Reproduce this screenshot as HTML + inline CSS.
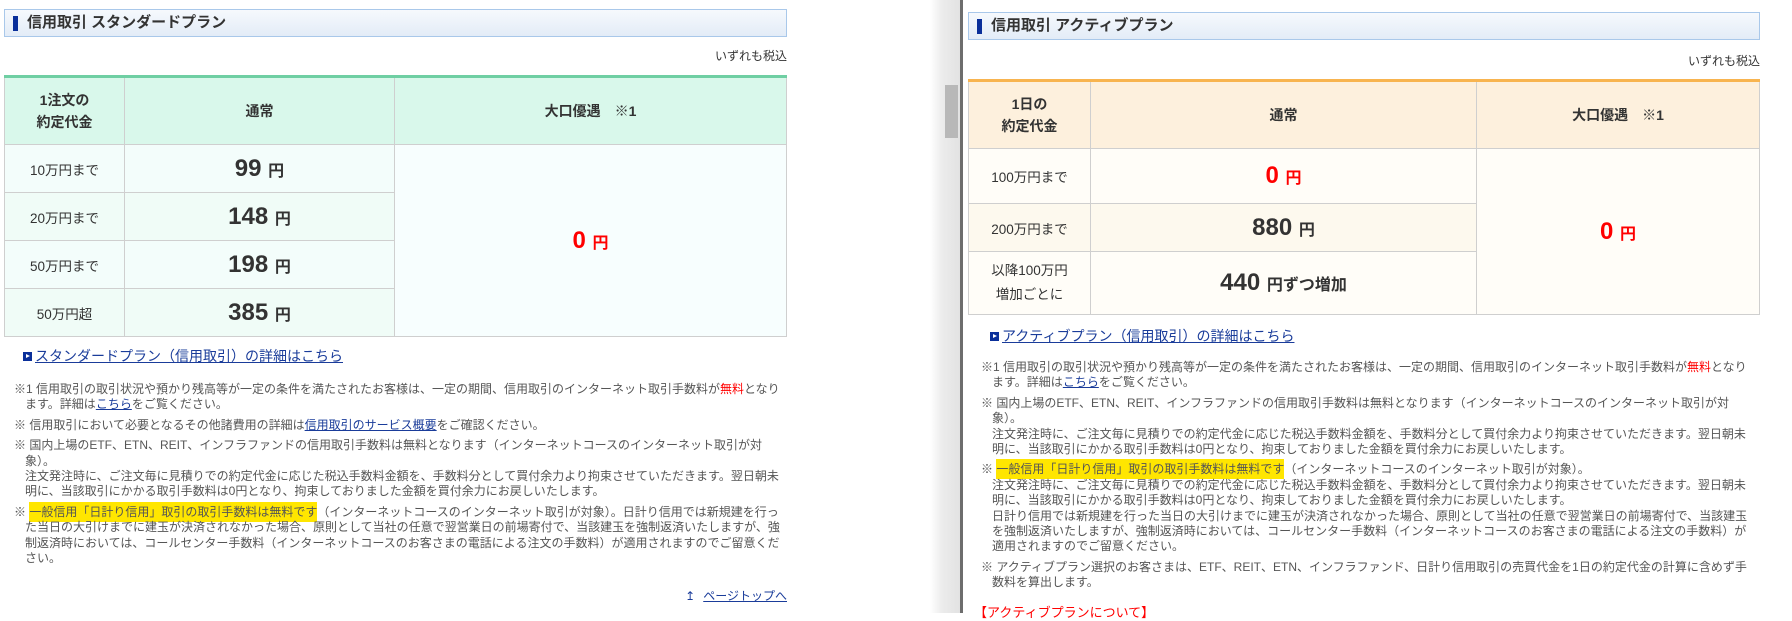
<!DOCTYPE html>
<html><head><meta charset="utf-8"><style>
*{margin:0;padding:0;box-sizing:border-box}
body{width:1792px;height:613px;overflow:hidden;background:#fff;font-family:"Liberation Sans","Noto Sans CJK JP",sans-serif;color:#333;position:relative}
.hd{position:absolute;height:28px;border:1px solid #a9c8ea;background:linear-gradient(#f6f9fd,#e3ecf7);font-size:15px;font-weight:bold;color:#333;line-height:26px;padding-left:22px}
.hd:before{content:"";position:absolute;left:8px;top:6px;width:5px;height:15px;background:#0a2f9a}
.tax{position:absolute;font-size:12px;color:#333;text-align:right}
table{position:absolute;border-collapse:collapse;table-layout:fixed}
td{border:1px solid #cfcfcf;text-align:center;font-size:13.5px;color:#333}
.h td{font-weight:bold;font-size:14px;line-height:22px}
.num{font-size:24px;font-weight:bold;color:#333}
.num small{font-size:16px}
.red{color:#f00}
.lk{position:absolute;font-size:14px;color:#1a3c9a;text-decoration:underline}
.lk i{display:inline-block;width:9px;height:9px;background:#0a2f9a;margin-right:3px;position:relative;top:0px}
.lk i:after{content:"";position:absolute;left:3px;top:2px;border-left:4px solid #fff;border-top:2.5px solid transparent;border-bottom:2.5px solid transparent}
.notes{position:absolute;font-size:12px;color:#555;line-height:15.4px}
.notes p{padding-left:11px;text-indent:-11px;margin-bottom:5px}
.notes a{color:#1a3c9a;text-decoration:underline}
.hl{background:#ffe600;padding:3px 0}
</style></head><body>

<div class="hd" style="left:4px;top:9px;width:783px">信用取引 スタンダードプラン</div>
<div class="tax" style="left:500px;top:47px;width:287px">いずれも税込</div>
<table style="left:4px;top:75px;width:783px;border-top:3px solid #6fcfa3">
<colgroup><col style="width:120px"><col style="width:270px"><col></colgroup>
<tr class="h" style="height:68px;background:#d9f8eb"><td>1注文の<br>約定代金</td><td>通常</td><td>大口優遇　※1</td></tr>
<tr style="height:48px;background:#f3fdfb"><td>10万円まで</td><td><span class="num">99 <small>円</small></span></td><td rowspan="4" style="background:#f7fefe"><span class="num red">0 <small>円</small></span></td></tr>
<tr style="height:48px;background:#f0fcf7"><td>20万円まで</td><td><span class="num">148 <small>円</small></span></td></tr>
<tr style="height:48px;background:#f3fdfb"><td>50万円まで</td><td><span class="num">198 <small>円</small></span></td></tr>
<tr style="height:48px;background:#f0fcf7"><td>50万円超</td><td><span class="num">385 <small>円</small></span></td></tr>
</table>
<div class="lk" style="left:23px;top:346px"><i></i>スタンダードプラン（信用取引）の詳細はこちら</div>
<div class="notes" style="left:14px;top:382px;width:776px">
<p>※1 信用取引の取引状況や預かり残高等が一定の条件を満たされたお客様は、一定の期間、信用取引のインターネット取引手数料が<span class="red">無料</span>となります。詳細は<a>こちら</a>をご覧ください。</p>
<p>※ 信用取引において必要となるその他諸費用の詳細は<a>信用取引のサービス概要</a>をご確認ください。</p>
<p>※ 国内上場のETF、ETN、REIT、インフラファンドの信用取引手数料は無料となります（インターネットコースのインターネット取引が対象）。<br>注文発注時に、ご注文毎に見積りでの約定代金に応じた税込手数料金額を、手数料分として買付余力より拘束させていただきます。翌日朝未明に、当該取引にかかる取引手数料は0円となり、拘束しておりました金額を買付余力にお戻しいたします。</p>
<p>※ <span class="hl">一般信用「日計り信用」取引の取引手数料は無料です</span>（インターネットコースのインターネット取引が対象）。日計り信用では新規建を行った当日の大引けまでに建玉が決済されなかった場合、原則として当社の任意で翌営業日の前場寄付で、当該建玉を強制返済いたしますが、強制返済時においては、コールセンター手数料（インターネットコースのお客さまの電話による注文の手数料）が適用されますのでご留意ください。</p>
</div>
<div style="position:absolute;left:640px;top:587px;width:147px;text-align:right;font-size:12px;color:#1a3c9a;white-space:nowrap"><span style="margin-right:8px">↥</span><u>ページトップへ</u></div>

<div style="position:absolute;left:930px;top:0;width:30px;height:613px;background:linear-gradient(90deg,#fff,#ececec 40%,#e2e2e2)"></div>
<div style="position:absolute;left:945px;top:85px;width:13px;height:53px;background:#b8b8b8"></div>
<div style="position:absolute;left:960px;top:0;width:3px;height:613px;background:#6d6d6d"></div>

<div class="hd" style="left:968px;top:12px;width:792px">信用取引 アクティブプラン</div>
<div class="tax" style="left:1460px;top:52px;width:300px">いずれも税込</div>
<table style="left:968px;top:79px;width:792px;border-top:3px solid #f8b44f">
<colgroup><col style="width:122px"><col style="width:386px"><col></colgroup>
<tr class="h" style="height:68px;background:#fdf0dd"><td>1日の<br>約定代金</td><td>通常</td><td>大口優遇　※1</td></tr>
<tr style="height:55px;background:#fffdf8"><td>100万円まで</td><td><span class="num red">0 <small>円</small></span></td><td rowspan="3" style="background:#fffdf8"><span class="num red">0 <small>円</small></span></td></tr>
<tr style="height:48px;background:#fdf9ee"><td>200万円まで</td><td><span class="num">880 <small>円</small></span></td></tr>
<tr style="height:63px;background:#fffdf8"><td style="line-height:24px">以降100万円<br>増加ごとに</td><td><span class="num">440 <small>円ずつ増加</small></span></td></tr>
</table>
<div class="lk" style="left:990px;top:326px"><i></i>アクティブプラン（信用取引）の詳細はこちら</div>
<div class="notes" style="left:981px;top:360px;width:776px">
<p>※1 信用取引の取引状況や預かり残高等が一定の条件を満たされたお客様は、一定の期間、信用取引のインターネット取引手数料が<span class="red">無料</span>となります。詳細は<a>こちら</a>をご覧ください。</p>
<p>※ 国内上場のETF、ETN、REIT、インフラファンドの信用取引手数料は無料となります（インターネットコースのインターネット取引が対象）。<br>注文発注時に、ご注文毎に見積りでの約定代金に応じた税込手数料金額を、手数料分として買付余力より拘束させていただきます。翌日朝未明に、当該取引にかかる取引手数料は0円となり、拘束しておりました金額を買付余力にお戻しいたします。</p>
<p>※ <span class="hl">一般信用「日計り信用」取引の取引手数料は無料です</span>（インターネットコースのインターネット取引が対象）。<br>注文発注時に、ご注文毎に見積りでの約定代金に応じた税込手数料金額を、手数料分として買付余力より拘束させていただきます。翌日朝未明に、当該取引にかかる取引手数料は0円となり、拘束しておりました金額を買付余力にお戻しいたします。<br>日計り信用では新規建を行った当日の大引けまでに建玉が決済されなかった場合、原則として当社の任意で翌営業日の前場寄付で、当該建玉を強制返済いたしますが、強制返済時においては、コールセンター手数料（インターネットコースのお客さまの電話による注文の手数料）が適用されますのでご留意ください。</p>
<p>※ アクティブプラン選択のお客さまは、ETF、REIT、ETN、インフラファンド、日計り信用取引の売買代金を1日の約定代金の計算に含めず手数料を算出します。</p>
</div>
<div style="position:absolute;left:974px;top:602px;font-size:13px;color:#f00">【アクティブプランについて】</div>
</body></html>
